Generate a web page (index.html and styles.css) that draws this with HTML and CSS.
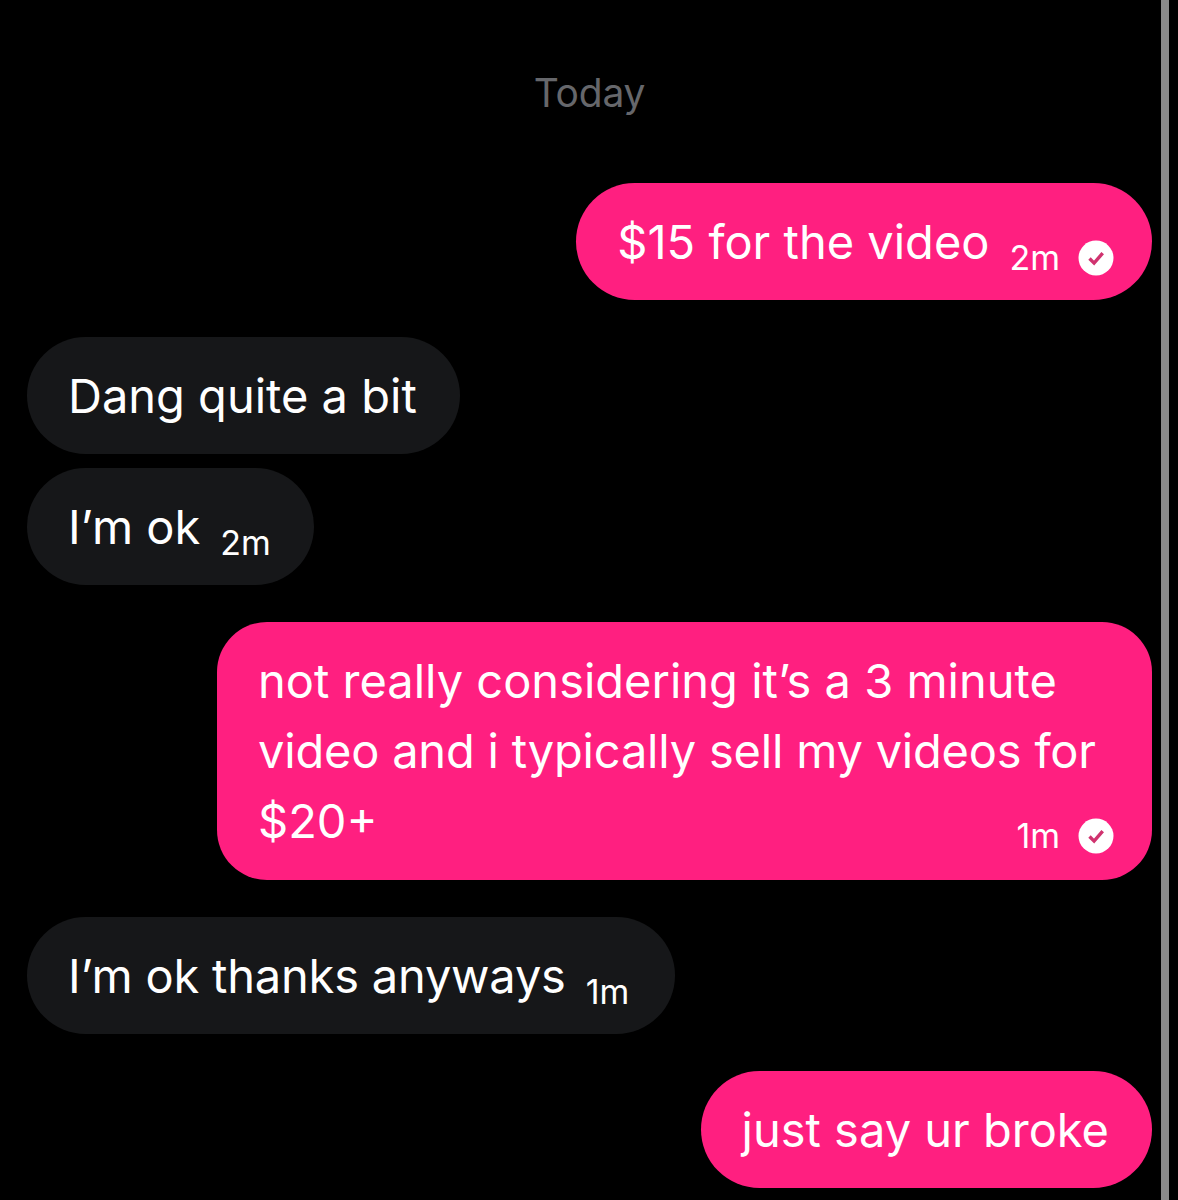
FILE: index.html
```html
<!DOCTYPE html>
<html lang="en">
<head>
<meta charset="utf-8">
<title>Messages</title>
<link rel="stylesheet" href="styles.css">
</head>
<body>
<div class="screen">
  <main class="thread">
    <div class="day">Today</div>
    <div class="bubble out first">
      <span class="text">$15 for the video</span>
      <span class="meta sent"><span class="time">2m</span>
        <svg class="check" viewBox="0 0 36 36"><circle cx="18" cy="18" r="17.5" fill="#fff"/><path d="M11.5 18.5l4.6 4.6 8.6-10" fill="none" stroke="#d0336f" stroke-width="3.4"/></svg>
      </span>
    </div>
    <div class="bubble in group">
      <span class="text">Dang quite a bit</span>
    </div>
    <div class="bubble in tight">
      <span class="text">I’m ok</span>
      <span class="meta"><span class="time">2m</span></span>
    </div>
    <div class="bubble out multi group">
      <span class="line">not really considering it’s a 3 minute</span>
      <span class="line snug">video and i typically sell my videos for</span>
      <div class="lastline">
        <span class="short">$20+</span>
        <span class="meta corner"><span class="time">1m</span>
          <svg class="check" viewBox="0 0 36 36"><circle cx="18" cy="18" r="17.5" fill="#fff"/><path d="M11.5 18.5l4.6 4.6 8.6-10" fill="none" stroke="#d0336f" stroke-width="3.4"/></svg>
        </span>
      </div>
    </div>
    <div class="bubble in group">
      <span class="text snug">I’m ok thanks anyways</span>
      <span class="meta wide"><span class="time">1m</span></span>
    </div>
    <div class="bubble out group">
      <span class="text">just say ur broke</span>
    </div>
  </main>
  <div class="scrollbar"></div>
</div>
</body>
</html>
```
FILE: styles.css
```css
* { box-sizing: border-box; }
html, body { margin: 0; height: 1200px; background: #000; overflow: hidden; }
body { font-family: Inter, "Liberation Sans", sans-serif; color: #fff; }
.screen { display: flex; height: 1200px; padding-right: 9px; }
.thread { flex: 1; display: flex; flex-direction: column; padding: 0 9px 0 27px; }
.scrollbar { width: 8px; background: #8a8a8a; }
.day { font-size: 39px; font-weight: 400; letter-spacing: -0.2px; line-height: 44px; color: #66676b; text-align: center; margin: 71px 0 0; }
.bubble { display: flex; min-height: 117px; border-radius: 58.5px; padding: 0 43px 0 41px; align-items: center; font-size: 47px; font-weight: 400; letter-spacing: 0; line-height: 70px; }
.out { align-self: flex-end; background: #ff1f80; }
.in { align-self: flex-start; background: #161719; }
.first { margin-top: 68px; }
.group { margin-top: 37px; }
.tight { margin-top: 14px; }
.text { white-space: nowrap; }
.snug { letter-spacing: -0.2px; }
.meta { display: inline-flex; align-items: center; gap: 18px; margin-left: 20px; padding-top: 32px; font-size: 34px; letter-spacing: 0; line-height: 40px; }
.sent { margin-right: -5px; }
.wide { margin-right: 3px; }
.check { width: 36px; height: 36px; display: block; }
.multi { width: 935px; display: block; min-height: 258px; border-radius: 50px; padding: 24px 38px 24px 41px; }
.line { display: block; white-space: nowrap; }
.lastline { display: flex; justify-content: space-between; align-items: flex-start; }
.corner { margin: 30px 0 0; padding: 0; }
```
